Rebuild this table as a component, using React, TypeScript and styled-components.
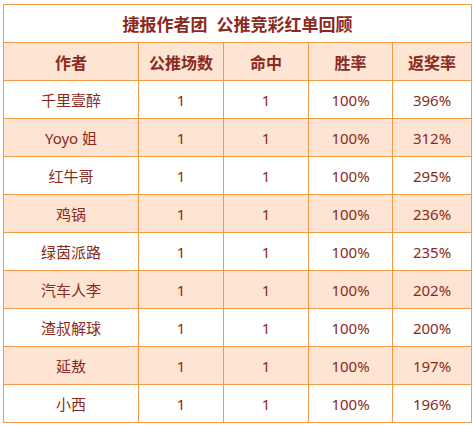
import styled, { createGlobalStyle } from 'styled-components';

const rows = [
  { name: '千里壹醉', picks: 1, hits: 1, win: '100%', ret: '396%' },
  { name: 'Yoyo 姐', picks: 1, hits: 1, win: '100%', ret: '312%' },
  { name: '红牛哥', picks: 1, hits: 1, win: '100%', ret: '295%' },
  { name: '鸡锅', picks: 1, hits: 1, win: '100%', ret: '236%' },
  { name: '绿茵派路', picks: 1, hits: 1, win: '100%', ret: '235%' },
  { name: '汽车人李', picks: 1, hits: 1, win: '100%', ret: '202%' },
  { name: '渣叔解球', picks: 1, hits: 1, win: '100%', ret: '200%' },
  { name: '延敖', picks: 1, hits: 1, win: '100%', ret: '197%' },
  { name: '小西', picks: 1, hits: 1, win: '100%', ret: '196%' },
];

const headers = ['作者', '公推场数', '命中', '胜率', '返奖率'];
const widths = [135, 85, 85, 84, 79];

const App = () => {
  return (
    <>
      <GlobalStyle />
      <Page>
        <Table>
          <colgroup>
            {widths.map((w, i) => (
              <col key={i} style={{ width: w }} />
            ))}
          </colgroup>
          <thead>
            <tr>
              <Title colSpan={5}>捷报作者团&nbsp;&nbsp;公推竞彩红单回顾</Title>
            </tr>
            <Row $shaded>
              {headers.map((h) => (
                <HeadCell key={h}>{h}</HeadCell>
              ))}
            </Row>
          </thead>
          <tbody>
            {rows.map((r, i) => (
              <Row key={r.name} $shaded={i % 2 === 1}>
                <Cell>{r.name}</Cell>
                <Cell>{r.picks}</Cell>
                <Cell>{r.hits}</Cell>
                <Cell>{r.win}</Cell>
                <Cell>{r.ret}</Cell>
              </Row>
            ))}
          </tbody>
        </Table>
      </Page>
    </>
  );
};

const GlobalStyle = createGlobalStyle`
  body {
    margin: 0;
    background: #fff;
    font-family: "Noto Sans", "Noto Sans CJK SC", sans-serif;
  }
`;

const Page = styled.div`
  padding: 4px 0 0 3px;
`;

const Table = styled.table`
  border-collapse: collapse;
  table-layout: fixed;
  width: 468px;
  color: #8b2a1c;
  border: 1px solid #f39a46;
`;

const Row = styled.tr<{ $shaded?: boolean }>`
  background: ${(p) => (p.$shaded ? '#fde4d3' : '#fff')};
`;

const Title = styled.th`
  height: 37px;
  padding: 0;
  border: 1px solid #f39a46;
  font-size: 17px;
  font-weight: 700;
  text-align: center;
  background: #fff;
`;

const HeadCell = styled.th`
  height: 37px;
  padding: 0;
  border: 1px solid #f39a46;
  font-size: 16px;
  font-weight: 700;
  text-align: center;
`;

const Cell = styled.td`
  height: 37px;
  padding: 0;
  border: 1px solid #f39a46;
  font-size: 15px;
  text-align: center;
`;

export default App;
